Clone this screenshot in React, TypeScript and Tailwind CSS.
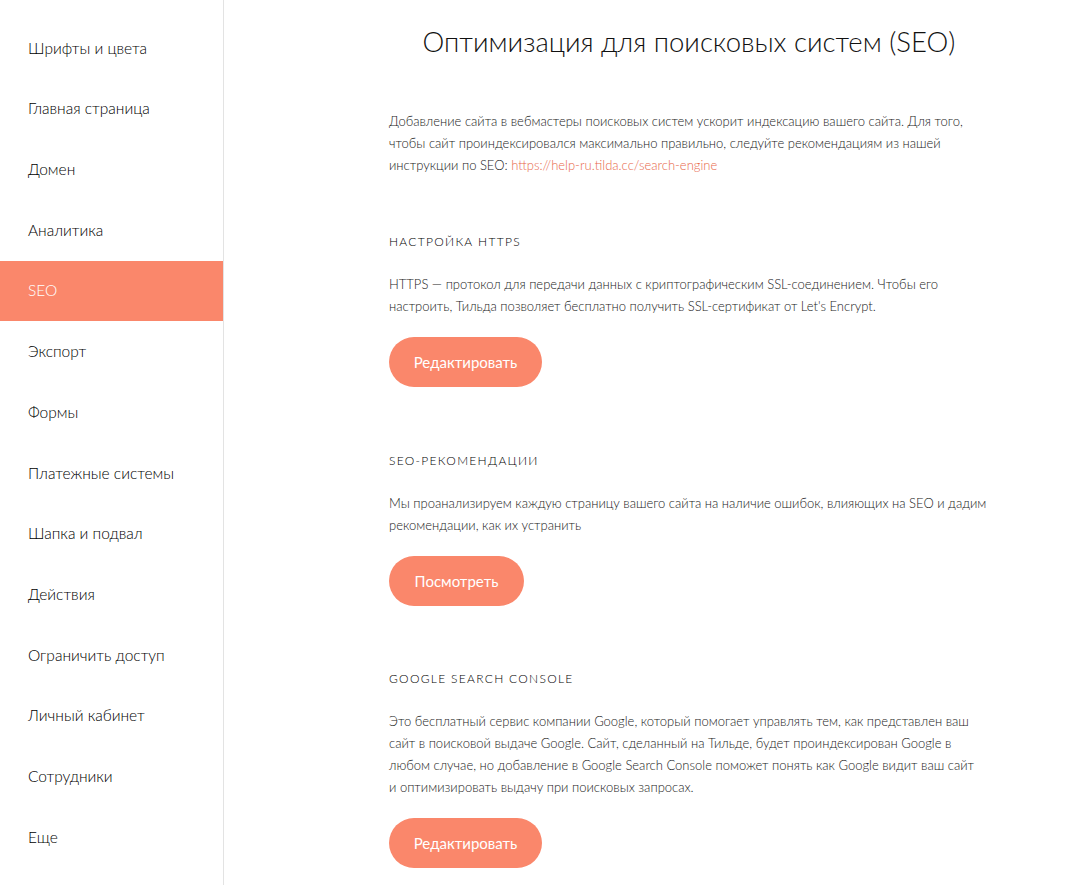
const navItems = [
  "Шрифты и цвета",
  "Главная страница",
  "Домен",
  "Аналитика",
  "SEO",
  "Экспорт",
  "Формы",
  "Платежные системы",
  "Шапка и подвал",
  "Действия",
  "Ограничить доступ",
  "Личный кабинет",
  "Сотрудники",
  "Еще",
];

const font = { fontFamily: "Lato, 'Noto Sans', sans-serif" };

function Section({
  title,
  children,
  button,
  width,
  className,
}: {
  title: string;
  children: React.ReactNode;
  button: string;
  width: string;
  className: string;
}) {
  return (
    <section className={className}>
      <h2 className="text-[12px] leading-[20px] tracking-[1.3px] uppercase text-[#000]">
        {title}
      </h2>
      <p className="mt-[21px] text-[13px] leading-[22px] text-[#1a1a1a]">{children}</p>
      <button
        className={`mt-[20px] h-[50px] ${width} rounded-full bg-[#fa876b] text-white text-[15px] font-normal flex items-center justify-center`}
      >
        {button}
      </button>
    </section>
  );
}

export default function App() {
  return (
    <div className="flex min-h-screen bg-white font-light" style={font}>
      {/* Sidebar */}
      <aside className="w-[224px] shrink-0 border-r border-[#e3e3e3] pt-[18px] pb-[20px]">
        {navItems.map((item) => (
          <div
            key={item}
            className={`h-[60.7px] flex items-center pl-[28px] text-[15.5px] ${
              item === "SEO" ? "bg-[#fa876b] text-white" : "text-[#000]"
            }`}
          >
            {item}
          </div>
        ))}
      </aside>

      {/* Content */}
      <main className="flex-1 pl-[165px]">
        <div className="w-[600px]">
          <h1 className="pt-[22px] text-[27.5px] leading-[40px] text-center text-[#111] font-light">
            Оптимизация для поисковых систем (SEO)
          </h1>

          <p className="mt-[48px] text-[13px] leading-[22px] text-[#1a1a1a]">
            Добавление сайта в вебмастеры поисковых систем ускорит индексацию вашего сайта. Для того,
            <br />
            чтобы сайт проиндексировался максимально правильно, следуйте рекомендациям из нашей
            <br />
            инструкции по SEO:{" "}
            <a className="text-[#e8674a]" href="#">
              https://help-ru.tilda.cc/search-engine
            </a>
          </p>

          <Section className="mt-[56px]" title="Настройка HTTPS" button="Редактировать" width="w-[153px]">
            HTTPS — протокол для передачи данных с криптографическим SSL-соединением. Чтобы его
            <br />
            настроить, Тильда позволяет бесплатно получить SSL-сертификат от Let's Encrypt.
          </Section>

          <Section className="mt-[64px]" title="SEO-рекомендации" button="Посмотреть" width="w-[135px]">
            Мы проанализируем каждую страницу вашего сайта на наличие ошибок, влияющих на SEO и дадим
            <br />
            рекомендации, как их устранить
          </Section>

          <Section className="mt-[63px]" title="Google Search Console" button="Редактировать" width="w-[153px]">
            Это бесплатный сервис компании Google, который помогает управлять тем, как представлен ваш
            <br />
            сайт в поисковой выдаче Google. Сайт, сделанный на Тильде, будет проиндексирован Google в
            <br />
            любом случае, но добавление в Google Search Console поможет понять как Google видит ваш сайт
            <br />
            и оптимизировать выдачу при поисковых запросах.
          </Section>
        </div>
      </main>
    </div>
  );
}
